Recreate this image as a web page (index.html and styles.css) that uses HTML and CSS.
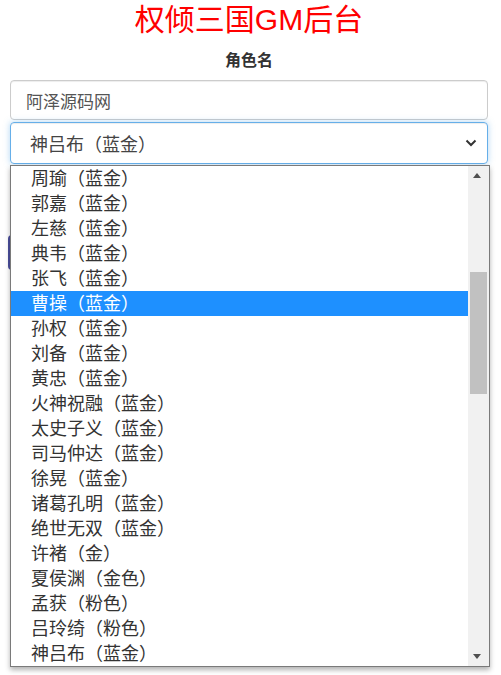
FILE: index.html
```html
<!DOCTYPE html>
<html lang="zh-CN">
<head>
<meta charset="utf-8">
<title>权倾三国GM后台</title>
<link rel="stylesheet" href="styles.css">
</head>
<body>
<div class="page">
  <h1 class="title">权倾三国GM后台</h1>
  <div class="label">角色名</div>
  <div class="field input-field">阿泽源码网</div>
  <div class="field select-field">
    <span>神吕布（蓝金）</span>
    <svg class="chev" width="12" height="8" viewBox="0 0 12 8"><path d="M1.5 1.5 L6 6 L10.5 1.5" fill="none" stroke="#333" stroke-width="2"/></svg>
  </div>
  <div class="btn"></div>

  <div class="dropdown">
    <div class="options">
      <div class="opt">周瑜（蓝金）</div>
      <div class="opt">郭嘉（蓝金）</div>
      <div class="opt">左慈（蓝金）</div>
      <div class="opt">典韦（蓝金）</div>
      <div class="opt">张飞（蓝金）</div>
      <div class="opt sel">曹操（蓝金）</div>
      <div class="opt">孙权（蓝金）</div>
      <div class="opt">刘备（蓝金）</div>
      <div class="opt">黄忠（蓝金）</div>
      <div class="opt">火神祝融（蓝金）</div>
      <div class="opt">太史子义（蓝金）</div>
      <div class="opt">司马仲达（蓝金）</div>
      <div class="opt">徐晃（蓝金）</div>
      <div class="opt">诸葛孔明（蓝金）</div>
      <div class="opt">绝世无双（蓝金）</div>
      <div class="opt">许褚（金）</div>
      <div class="opt">夏侯渊（金色）</div>
      <div class="opt">孟获（粉色）</div>
      <div class="opt">吕玲绮（粉色）</div>
      <div class="opt">神吕布（蓝金）</div>
    </div>
    <div class="sbar">
      <div class="arrow up"></div>
      <div class="track"><div class="thumb"></div></div>
      <div class="arrow down"></div>
    </div>
  </div>
</div>
</body>
</html>
```

FILE: styles.css
```css
html, body {
  margin: 0;
  padding: 0;
  background: #fff;
}
body {
  font-family: "Liberation Sans", "Noto Sans CJK SC", sans-serif;
  color: #333;
}
.page {
  position: relative;
  min-height: 675px;
  padding: 0 13px 0 10px;
}
.title {
  margin: 0;
  height: 40px;
  line-height: 40px;
  font-size: 30px;
  font-weight: normal;
  color: #ff0000;
  text-align: center;
}
.label {
  margin-top: 11px;
  height: 20px;
  line-height: 20px;
  font-size: 16px;
  font-weight: bold;
  text-align: center;
  color: #333;
}
.field {
  box-sizing: border-box;
  border: 1px solid #ccc;
  border-radius: 4px;
  box-shadow: inset 0 1px 1px rgba(0,0,0,.075);
  display: flex;
  align-items: center;
}
.input-field {
  margin-top: 9px;
  height: 40px;
  padding-left: 15px;
  font-size: 17px;
  color: #555;
}
.select-field {
  margin-top: 2px;
  height: 42px;
  padding: 0 10px 0 19px;
  font-size: 18px;
  color: #444;
  border-color: #66afe9;
  box-shadow: inset 0 1px 1px rgba(0,0,0,.075), 0 0 6px rgba(102,175,233,.5);
  justify-content: space-between;
}
.chev {
  display: block;
}
.btn {
  margin: 71px 0 0 -2px;
  height: 35px;
  width: 120px;
  border-radius: 4px;
  background: #4b4f9e;
}
.dropdown {
  position: absolute;
  top: 165px;
  left: 10px;
  width: 480px;
  height: 502px;
  box-sizing: border-box;
  border: 1px solid #7a7a7a;
  background: #fff;
  box-shadow: 0 3px 5px rgba(0,0,0,.3);
  display: flex;
}
.options {
  flex: 1;
}
.opt {
  height: 25px;
  line-height: 26px;
  padding-left: 20px;
  font-size: 18px;
  color: #333;
  white-space: nowrap;
}
.opt.sel {
  background: #1e90ff;
  color: #fff;
}
.sbar {
  width: 21px;
  background: #f1f1f1;
  display: flex;
  flex-direction: column;
}
.arrow {
  height: 20px;
  position: relative;
}
.arrow::after {
  content: "";
  position: absolute;
  left: 5px;
  width: 0;
  height: 0;
  border-left: 4.5px solid transparent;
  border-right: 4.5px solid transparent;
}
.arrow.up::after {
  top: 7px;
  border-bottom: 5px solid #505050;
}
.arrow.down::after {
  top: 8px;
  border-top: 5px solid #505050;
}
.track {
  flex: 1;
  padding-top: 86px;
}
.thumb {
  margin: 0 2px;
  height: 122px;
  background: #c1c1c1;
}
```
